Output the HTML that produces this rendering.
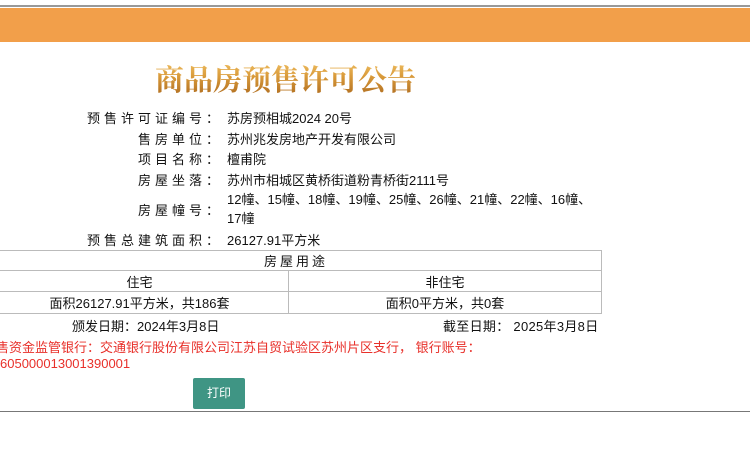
<!DOCTYPE html>
<html><head><meta charset="utf-8"><style>
*{margin:0;padding:0;box-sizing:border-box}
body{width:750px;height:450px;background:#fff;position:relative;overflow:hidden;font-family:"Liberation Sans","Noto Sans CJK SC",sans-serif;font-size:13px;color:#111}
.a{position:absolute;white-space:nowrap}
.lbl{position:absolute;right:527px;white-space:nowrap;letter-spacing:4px}
.val{position:absolute;left:227px;white-space:nowrap}
.title{left:155px;top:58px;font-family:"Noto Serif CJK SC",serif;font-size:29px;font-weight:bold;background:linear-gradient(180deg,#f4c66a 0%,#d99a3a 45%,#a9661c 100%);-webkit-background-clip:text;background-clip:text;color:transparent;letter-spacing:0}
table{position:absolute;left:-10px;top:250px;width:612px;border-collapse:collapse}
td{border:1px solid #bbb;text-align:center;height:21px;font-size:13px;padding:0}
.red{color:#e8302a}
</style></head><body>
<div class="a" style="left:0;top:5px;width:750px;height:2px;background:#999"></div>
<div class="a" style="left:0;top:8px;width:750px;height:34px;background:#f29f4a"></div>
<div class="a title">商品房预售许可公告</div>
<div class="lbl" style="top:108px">预售许可证编号：</div><div class="val" style="top:108px">苏房预相城2024 20号</div>
<div class="lbl" style="top:129px">售房单位：</div><div class="val" style="top:129px">苏州兆发房地产开发有限公司</div>
<div class="lbl" style="top:149px">项目名称：</div><div class="val" style="top:149px">檀甫院</div>
<div class="lbl" style="top:170px">房屋坐落：</div><div class="val" style="top:170px">苏州市相城区黄桥街道粉青桥街2111号</div>
<div class="lbl" style="top:200px">房屋幢号：</div><div class="val" style="top:190px;line-height:19px">12幢、15幢、18幢、19幢、25幢、26幢、21幢、22幢、16幢、<br>17幢</div>
<div class="lbl" style="top:230px">预售总建筑面积：</div><div class="val" style="top:230px">26127.91平方米</div>
<table>
<tr><td colspan="2" style="letter-spacing:3px;height:20px">房屋用途</td></tr>
<tr><td style="width:298px">住宅</td><td>非住宅</td></tr>
<tr><td style="height:22px">面积26127.91平方米，共186套</td><td>面积0平方米，共0套</td></tr>
</table>
<div class="a" style="left:72px;top:316px">颁发日期：2024年3月8日</div>
<div class="a" style="left:443px;top:316px;letter-spacing:0.3px">截至日期：&nbsp;2025年3月8日</div>
<div class="a red" style="left:-4px;top:337px">售资金监管银行：交通银行股份有限公司江苏自贸试验区苏州片区支行，&nbsp;银行账号：</div>
<div class="a red" style="left:0;top:356px">605000013001390001</div>
<div class="a" style="left:193px;top:378px;width:52px;height:31px;background:#3f9584;border-radius:2px;color:#fff;text-align:center;line-height:31px;font-size:12px">打印</div>
<div class="a" style="left:0;top:411px;width:750px;height:1px;background:#777"></div>
</body></html>
